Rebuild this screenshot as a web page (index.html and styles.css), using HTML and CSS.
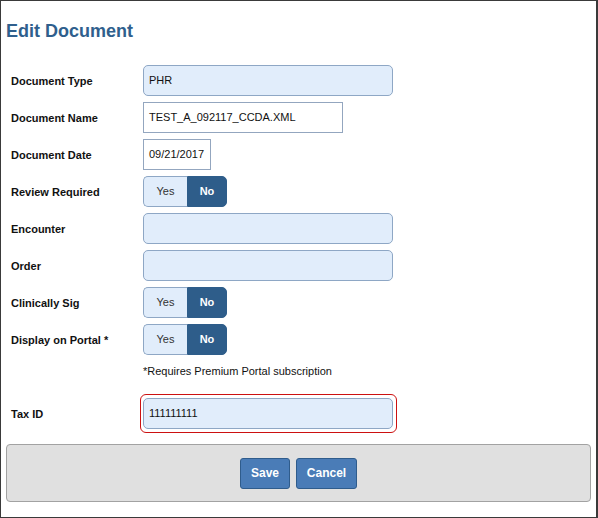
FILE: index.html
```html
<!DOCTYPE html>
<html>
<head>
<meta charset="utf-8">
<link rel="stylesheet" href="styles.css">
</head>
<body>
<div class="frame">
  <h1 class="title">Edit Document</h1>
  <div class="form">
    <div class="row">
      <label class="lbl">Document Type</label>
      <div class="field fill wide">PHR</div>
    </div>
    <div class="row">
      <label class="lbl">Document Name</label>
      <div class="field plain name">TEST_A_092117_CCDA.XML</div>
    </div>
    <div class="row">
      <label class="lbl">Document Date</label>
      <div class="field plain date">09/21/2017</div>
    </div>
    <div class="row">
      <label class="lbl">Review Required</label>
      <div class="toggle"><span class="yes">Yes</span><span class="no">No</span></div>
    </div>
    <div class="row">
      <label class="lbl">Encounter</label>
      <div class="field fill wide"></div>
    </div>
    <div class="row">
      <label class="lbl">Order</label>
      <div class="field fill wide"></div>
    </div>
    <div class="row">
      <label class="lbl">Clinically Sig</label>
      <div class="toggle"><span class="yes">Yes</span><span class="no">No</span></div>
    </div>
    <div class="row">
      <label class="lbl">Display on Portal *</label>
      <div class="toggle"><span class="yes">Yes</span><span class="no">No</span></div>
    </div>
  </div>
  <p class="note">*Requires Premium Portal subscription</p>
  <div class="row taxrow">
    <label class="lbl">Tax ID</label>
    <div class="invalid"><div class="field fill wide">111111111</div></div>
  </div>
  <div class="footer">
    <button class="btn save">Save</button>
    <button class="btn cancel">Cancel</button>
  </div>
</div>
</body>
</html>
```
FILE: styles.css
```css
html, body {
  margin: 0;
  padding: 0;
  background: #fff;
}
body {
  font-family: "Liberation Sans", Arial, sans-serif;
  color: #111;
}
.frame {
  box-sizing: border-box;
  width: 598px;
  height: 518px;
  border: 1px solid #3a3a3a;
  border-right-width: 2px;
  padding-top: 20px;
}
.title {
  margin: 0 0 0 5px;
  font-size: 18px;
  line-height: 21px;
  font-weight: bold;
  color: #2f5f8d;
}
.form {
  margin-top: 23px;
  padding-left: 10px;
  display: flex;
  flex-direction: column;
  gap: 6px;
}
.row {
  display: flex;
  align-items: center;
  height: 31px;
}
.lbl {
  width: 132px;
  flex: none;
  font-size: 11px;
  font-weight: bold;
  color: #111;
}
.field {
  box-sizing: border-box;
  height: 31px;
  font-size: 11px;
  line-height: 29px;
  padding-left: 5px;
  color: #111;
  border: 1px solid #8ea7c5;
}
.fill {
  background: #e1edfb;
  border-radius: 5px;
}
.plain {
  background: #fff;
  border-color: #93a6bf;
}
.wide { width: 250px; }
.name { width: 200px; }
.date { width: 68px; }
.toggle {
  display: flex;
  height: 31px;
  box-sizing: border-box;
}
.toggle span {
  box-sizing: border-box;
  height: 31px;
  line-height: 29px;
  font-size: 11px;
  text-align: center;
}
.yes {
  width: 44px;
  background: #e1edfb;
  border: 1px solid #8ea7c5;
  border-right: none;
  border-radius: 5px 0 0 5px;
  color: #333;
}
.no {
  width: 40px;
  background: #2e5d8a;
  border: 1px solid #2e5d8a;
  border-radius: 0 5px 5px 0;
  color: #fff;
  font-weight: bold;
}
.note {
  margin: 10px 0 0 142px;
  font-size: 11px;
  line-height: 13px;
  color: #111;
}
.taxrow {
  margin-top: 16px;
  padding-left: 10px;
  height: 39px;
}
.invalid {
  margin-left: -3px;
  padding: 3px 3px 3px 2px;
  border: 1px solid #cc1111;
  border-radius: 6px;
}
.footer {
  box-sizing: border-box;
  margin: 11px 5px 0 5px;
  height: 58px;
  background: #e0e0e0;
  border: 1px solid #a2a2a2;
  border-radius: 4px;
  display: flex;
  justify-content: center;
  align-items: center;
  gap: 6px;
}
.btn {
  box-sizing: border-box;
  height: 31px;
  padding: 0;
  background: #4a7cb7;
  border: 1px solid #2f5c8c;
  border-radius: 3px;
  color: #fff;
  font-family: "Liberation Sans", Arial, sans-serif;
  font-size: 12px;
  font-weight: bold;
}
.save { width: 50px; }
.cancel { width: 61px; }
```
